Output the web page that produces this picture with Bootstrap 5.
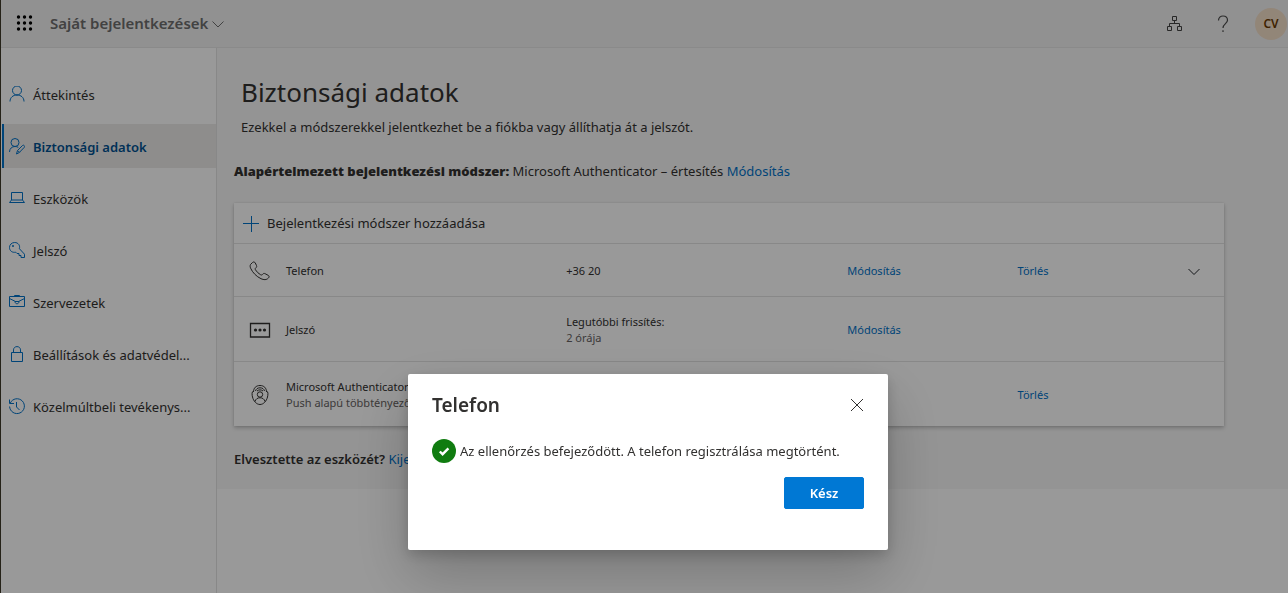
<!DOCTYPE html>
<html lang="hu">
<head>
<meta charset="utf-8">
<meta name="viewport" content="width=device-width, initial-scale=1">
<title>Saját bejelentkezések</title>
<link href="https://cdn.jsdelivr.net/npm/bootstrap@5.3.0/dist/css/bootstrap.min.css" rel="stylesheet">
<style>
  :root { --blue: #0072c9; --ink: #323130; --line: #e3e3e3; }
  body { font-family: "Noto Sans", "Open Sans", sans-serif; font-size: 13px; line-height: 20px; color: var(--ink); border-left: 1px solid #3f3a28; }
  svg { display: block; flex: none; fill: none; }
  svg:not([stroke]) { stroke: currentColor; }
  a { color: var(--blue); text-decoration: none; }
  .topbar { height: 48px; background: #f2f2f2; border-bottom: 1px solid #e6e6e6; padding: 0 1px 0 14px; }
  .brand-btn { font-size: 15px; font-weight: 600; color: #6e6e6e; margin-left: 17px; }
  .avatar { width: 32px; height: 32px; background: #f4dfc9; color: #6a3a00; font-size: 12px; font-weight: 600; }
  .org-btn { margin-right: 32px; }
  .help-btn { margin-right: 24px; }
  .sidebar { width: 216px; border-right: 1px solid var(--line); padding-top: 24px; min-height: calc(100vh - 48px); }
  .side-link { height: 44px; gap: 8px; padding: 2px 0 0 5px; color: var(--ink); border-left: 2px solid transparent; margin-left: 1px; }
  .side-link svg { color: var(--blue); }
  .side-link.active { background: #edebe9; border-color: var(--blue); color: #005192; font-weight: 600; }
  .content-area { background: #f7f7f7; padding: 24px 64px 20px 17px; }
  .intro { padding-left: 7px; }
  h1 { font-size: 26px; line-height: 40px; margin: 0 0 5px; }
  .default-method { margin-bottom: 22px; }
  .default-method b { font-weight: 900; }
  .methods { background: #fff; box-shadow: 0 2px 4px rgba(0,0,0,.22), 0 0 2px rgba(0,0,0,.1); }
  .add-btn { height: 41px; gap: 8px; padding: 2px 9px 0; font-size: 13px; color: var(--ink); border-bottom: 1px solid var(--line); }
  .method-table { table-layout: fixed; font-size: 11px; line-height: 16px; color: var(--ink); --bs-table-bg: transparent; --bs-table-color: var(--ink); }
  .method-table td { padding: 2px 0 0; border-bottom: 1px solid var(--line); vertical-align: middle; height: 65px; }
  .method-table tr:first-child td { height: 52px; }
  .method-table tr:last-child td { border-bottom: 0; }
  .method-table td:first-child { padding-left: 15px; }
  .col-icon { width: 52px; } .col-name { width: 28.3%; } .col-value { width: 28.4%; } .col-act { width: 17.2%; }
  .muted-text { color: #66625f; }
  .lost-device { margin-top: 23px; }
  .modal-backdrop { --bs-backdrop-opacity: .4; }
  .modal { padding-left: 8px; }
  .modal-dialog { max-width: 480px; margin-top: 374px; }
  .modal-content { border: 0; border-radius: 2px; min-height: 176px; padding: 16px 24px; color: var(--ink); box-shadow: 0 25px 57px rgba(0,0,0,.22), 0 5px 14px rgba(0,0,0,.18); }
  .modal-title { font-size: 19px; line-height: 30px; font-weight: 600; }
  .close-btn { color: var(--ink); }
  .result-line { margin: 19px 0 14px; }
  .done-btn { width: 80px; height: 32px; border-radius: 2px; font-size: 13px; font-weight: 600; padding: 2px 0 0; --bs-btn-bg: #0078d4; --bs-btn-border-color: #0078d4; }
</style>
</head>
<body>
<header class="topbar d-flex align-items-center justify-content-between">
  <div class="d-flex align-items-center">
    <button type="button" class="btn p-0 border-0 text-black" aria-label="Alkalmazásindító">
      <svg width="18" height="20" viewBox="0 0 18 20"><g fill="#000" stroke="none"><circle cx="3.500" cy="3" r="1.700"/><circle cx="9.500" cy="3" r="1.700"/><circle cx="15.500" cy="3" r="1.700"/><circle cx="3.500" cy="9" r="1.700"/><circle cx="9.500" cy="9" r="1.700"/><circle cx="15.500" cy="9" r="1.700"/><circle cx="3.500" cy="15" r="1.700"/><circle cx="9.500" cy="15" r="1.700"/><circle cx="15.500" cy="15" r="1.700"/></g></svg>
    </button>
    <button type="button" class="brand-btn btn p-0 border-0 d-flex align-items-center">Saját bejelentkezések
      <svg class="ms-1" width="12" height="8" viewBox="0 0 12 8"><path d="M.5 1.500 6 7l5.500-5.500"/></svg>
    </button>
  </div>
  <div class="d-flex align-items-center">
    <button type="button" class="org-btn btn p-0 border-0" aria-label="Szervezet">
      <svg width="16" height="16" viewBox="0 0 16 16" stroke="#444"><path d="M5.500.5h4v4h-4zM.5 10.500h4v4h-4zM10.500 10.500h4v4h-4zM7.500 4.500v3M2.500 10.500v-3h10v3"/></svg>
    </button>
    <button type="button" class="help-btn btn p-0 border-0" aria-label="Súgó">
      <svg width="16" height="18" viewBox="0 0 16 18" stroke="#4a4a4a"><path d="M3.500 5.500C3.500 2.500 5.500 1 8 1s4.500 1.500 4.500 4.200C12.500 8.500 8 8.800 8 13M8 15.200V17" stroke-width="1.200"/></svg>
    </button>
    <button type="button" class="avatar btn p-0 border-0 rounded-circle">CV</button>
  </div>
</header>

<div class="d-flex">
  <nav class="sidebar flex-shrink-0 d-flex flex-column gap-2">
    <a class="side-link d-flex align-items-center" href="#">
      <svg width="16" height="18" viewBox="0 0 16 18"><circle cx="8" cy="4.500" r="4.500"/><path d="M1 15.500C1 11.500 4 9 8 9s7 2.500 7 6.500"/></svg>Áttekintés</a>
    <a class="side-link active d-flex align-items-center" href="#">
      <svg width="16" height="18" viewBox="0 0 16 18"><circle cx="6" cy="4.500" r="4"/><path d="M.5 14C.5 10.500 3 8.500 6 8.500c1.300 0 2.400.3 3.300.9M7.500 16l1-3.500 5-5c1-1 2.800.6 1.800 1.800l-5 5.200zM8.700 12.500l2 2"/></svg>Biztonsági adatok</a>
    <a class="side-link d-flex align-items-center" href="#">
      <svg width="16" height="16" viewBox="0 0 16 16"><path d="M2.500 9V1.500h11V9M2.500 9 .5 11.500h15l-2-2.500z"/></svg>Eszközök</a>
    <a class="side-link d-flex align-items-center" href="#">
      <svg width="16" height="18" viewBox="0 0 16 18"><path d="M10.400 6.700c.9-3.400-1.300-6.200-4.700-6.200C2.700.5.500 2.700.5 5.500c0 3.400 2.800 5.400 6.200 4.700l1.300 1.300h2v2h2v2h3.500v-3.300z"/><circle cx="4" cy="4" r=".6" fill="currentColor"/></svg>Jelszó</a>
    <a class="side-link d-flex align-items-center" href="#">
      <svg width="16" height="16" viewBox="0 0 16 16"><path d="M.5 1.500h15v10H.5zM5.500 1.500v-1h5v1M.5 3.500l6 3M15.500 3.500l-6 3M6 6.500h4c0 3-4 3-4 0z"/></svg>Szervezetek</a>
    <a class="side-link d-flex align-items-center" href="#">
      <svg width="16" height="18" viewBox="0 0 16 18"><path d="M2.500 6.500h11v9h-11zM4.500 6.500V3.900C4.500 2 6 .6 8 .6s3.500 1.400 3.500 3.300v2.600"/></svg>Beállítások és adatvédel...</a>
    <a class="side-link d-flex align-items-center" href="#">
      <svg width="16" height="18" viewBox="0 0 16 18"><path d="M1.300 5A7.400 7.400 0 1 1 .6 8.500M.5 1.500v4H5M7.500 4v5l3 3"/></svg>Közelmúltbeli tevékenys...</a>
  </nav>

  <main class="flex-grow-1">
    <div class="content-area">
      <div class="intro">
        <h1 class="fw-normal">Biztonsági adatok</h1>
        <p class="mb-4">Ezekkel a módszerekkel jelentkezhet be a fiókba vagy állíthatja át a jelszót.</p>
      </div>
      <p class="default-method"><b>Alapértelmezett bejelentkezési módszer:</b> Microsoft Authenticator – értesítés <a href="#">Módosítás</a></p>

      <section class="methods">
        <button type="button" class="add-btn btn w-100 rounded-0 border-top-0 border-start-0 border-end-0 d-flex align-items-center">
          <svg width="16" height="16" viewBox="0 0 16 16" stroke="#0072c9"><path d="M8.500 0v16M0 7.500h16"/></svg><span>Bejelentkezési módszer hozzáadása</span>
        </button>
        <table class="method-table table mb-0">
          <colgroup><col class="col-icon"><col class="col-name"><col class="col-value"><col class="col-act"><col class="col-act"><col></colgroup>
          <tbody>
          <tr>
            <td><svg width="22" height="20" viewBox="0 0 22 20"><path d="M1.500 3.500 3.500 1.500C4.500.6 5.600.8 6.300 2l1.200 2.500c.4.900.2 1.600-.5 2.200-1 .8-1 1.500-.4 2.300 1.300 2 2.800 3.400 4.900 4.700.9.500 1.500.4 2.200-.5.8-.9 1.500-1 2.400-.5l3 1.600c1.200.7 1.400 1.700.4 2.600-2 2.300-4.700 2-7.500.8C7.500 15.600 3.500 11.500 1.600 7.200 1 5.800 1 4.600 1.500 3.500z"/></svg></td>
            <td>Telefon</td><td>+36 20</td><td><a href="#">Módosítás</a></td><td><a href="#">Törlés</a></td>
            <td><button type="button" class="btn p-0 border-0" aria-label="Kibontás"><svg width="12" height="8" viewBox="0 0 12 8"><path d="M.5 1 6 6.500 11.500 1"/></svg></button></td>
          </tr>
          <tr>
            <td><svg width="22" height="16" viewBox="0 0 22 16"><path d="M1.500 1.500h19v13.500h-19z" stroke-width="1.300"/><g fill="currentColor" stroke="none"><circle cx="6.500" cy="8" r="1.600"/><circle cx="11" cy="8" r="1.600"/><circle cx="15.500" cy="8" r="1.600"/></g></svg></td>
            <td>Jelszó</td><td>Legutóbbi frissítés:<br><span class="muted-text">2 órája</span></td><td><a href="#">Módosítás</a></td><td></td><td></td>
          </tr>
          <tr>
            <td><svg width="22" height="22" viewBox="0 0 22 22"><path d="M4.500 7C2.500 7.500 3 11 3.500 13c1 4 4 7.500 7.500 7.500s6.500-3.500 7.500-7.500c.5-2 1-5.500-1-6M4.500 8C4.500 4 7 1.500 11 1.500S17.500 4 17.500 8M6.500 7c.5-2 2-3.200 4.500-3.200s4 1.200 4.500 3.200M8 7c1.500-1.500 4.500-1.500 6 0"/><circle cx="11" cy="10.500" r="2.700"/><path d="M6 17.500c1-5 9-5 10 0"/></svg></td>
            <td class="text-nowrap">Microsoft Authenticator<br><span class="muted-text">Push alapú többtényezős</span></td><td></td><td></td><td><a href="#">Törlés</a></td><td></td>
          </tr>
          </tbody>
        </table>
      </section>
      <p class="lost-device mb-0"><span class="fw-semibold">Elvesztette az eszközét?</span> <a href="#">Kijelentkezés</a></p>
    </div>
  </main>
</div>

<div class="modal-backdrop show"></div>
<div class="modal show d-block" tabindex="-1" role="dialog" aria-modal="true" aria-labelledby="dialogTitle">
  <div class="modal-dialog mb-0">
    <div class="modal-content">
      <div class="d-flex align-items-center justify-content-between">
        <h2 class="modal-title mb-0" id="dialogTitle">Telefon</h2>
        <button type="button" class="close-btn btn p-0 border-0" aria-label="Bezárás"><svg width="14" height="14" viewBox="0 0 14 14"><path d="m1 1 12 12M13 1 1 13"/></svg></button>
      </div>
      <div class="result-line d-flex align-items-center gap-1">
        <svg width="24" height="24" viewBox="0 0 24 24" stroke="none"><circle cx="12" cy="12" r="12" fill="#107c10"/><path d="m7.800 12.500 2.800 2.700 5.800-5.800" stroke="#fff" stroke-width="2.400"/></svg>
        <span>Az ellenőrzés befejeződött. A telefon regisztrálása megtörtént.</span>
      </div>
      <div class="text-end"><button type="button" class="done-btn btn btn-primary">Kész</button></div>
    </div>
  </div>
</div>
<script src="https://cdn.jsdelivr.net/npm/bootstrap@5.3.0/dist/js/bootstrap.bundle.min.js"></script>
</body>
</html>
